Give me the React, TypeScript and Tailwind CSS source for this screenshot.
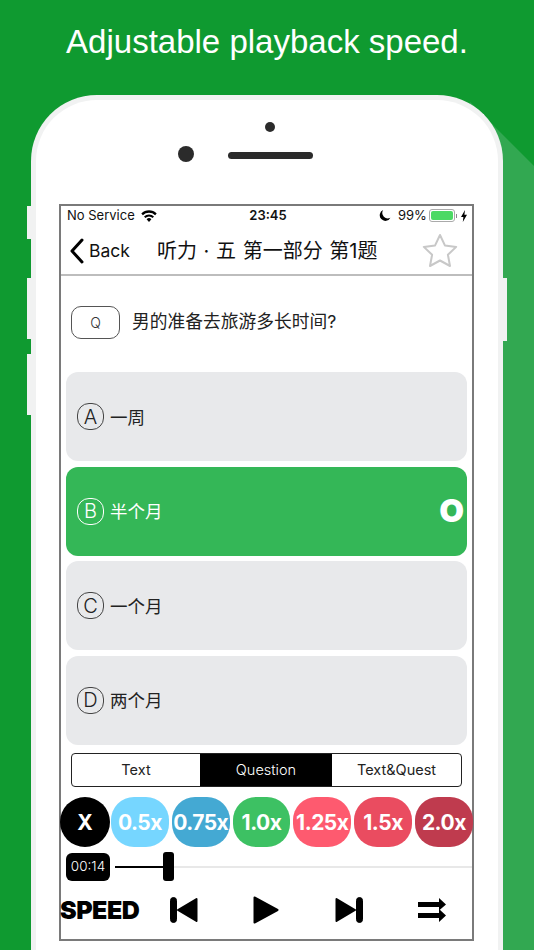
const font = "font-['Inter','Noto_Sans_CJK_SC',sans-serif]";

const options = [
  { letter: 'A', label: '一周' },
  { letter: 'B', label: '半个月', correct: true },
  { letter: 'C', label: '一个月' },
  { letter: 'D', label: '两个月' },
];

const speeds = [
  { label: '0.5x', color: 'bg-[#76d6ff]' },
  { label: '0.75x', color: 'bg-[#44a9d3]' },
  { label: '1.0x', color: 'bg-[#3dc163]' },
  { label: '1.25x', color: 'bg-[#fe5a6f]' },
  { label: '1.5x', color: 'bg-[#ea4c60]' },
  { label: '2.0x', color: 'bg-[#bf3b4e]' },
];

function StatusBar() {
  return (
    <div className="flex h-[21px] items-center whitespace-nowrap pb-[2px] pl-[6px] text-[13px] leading-none text-[#111]">
      <span className="w-[68px]">No Service</span>
      <svg viewBox="0 0 16 12" className="ml-[6px] h-[12px] w-[16px] shrink-0" fill="#000">
        <path d="M8 12 5.6 9.3a3.4 3.4 0 0 1 4.8 0Z" />
        <path d="M4.4 8.1 3 6.5a7 7 0 0 1 10 0l-1.4 1.6a5 5 0 0 0-7.2 0Z" />
        <path d="M1.9 5.3.3 3.5a11 11 0 0 1 15.4 0l-1.6 1.8a8.8 8.8 0 0 0-12.2 0Z" />
      </svg>
      <span className="ml-[92px] w-[38px] text-center font-semibold">23:45</span>
      <svg viewBox="0 0 12 12" className="ml-[92px] h-[13px] w-[12px] shrink-0" fill="#000">
        <path d="M4.2.6a5.6 5.6 0 1 0 7.2 7.6A5.4 5.4 0 0 1 4.2.6Z" />
      </svg>
      <span className="ml-[7px] w-[27px]">99%</span>
      <div className="ml-[4px] flex h-[13px] w-[26px] shrink-0 items-center rounded-[3px] border border-[#aaa] p-px">
        <div className="h-full w-full rounded-[2px] bg-[#4cd964]" />
      </div>
      <div className="ml-px h-[4px] w-px shrink-0 bg-[#888]" />
      <svg viewBox="0 0 6 12" className="ml-[4px] h-[12px] w-[6px] shrink-0" fill="#000">
        <path d="M4 0 0 7h2.4L1.8 12 6 4.8H3.4Z" />
      </svg>
    </div>
  );
}

function NavBar() {
  return (
    <div className="flex h-[49px] items-center border-b-2 border-[#bdbdbd] pl-[9px]">
      <svg viewBox="0 0 14 26" className="h-[26px] w-[14px] shrink-0" fill="none" stroke="#000" strokeWidth="3" strokeLinecap="round" strokeLinejoin="round">
        <path d="M12 2 2 13l10 11" />
      </svg>
      <span className="ml-[5px] w-[40px] text-[17.5px] leading-none text-[#111]">Back</span>
      <span className="ml-[28px] w-[220px] text-[20px] leading-none whitespace-nowrap text-[#111] [word-spacing:1px]">听力 · 五 第一部分 第1题</span>
      <svg viewBox="0 0 36 34" className="-mt-[2px] ml-[45px] h-[34px] w-[36px] shrink-0" fill="#fff" stroke="#c8c8c8" strokeWidth="2" strokeLinejoin="round">
        <path d="m18 2 4.9 10.4 11.3 1.5-8.3 7.9 2.1 11.2L18 27.5 8 33l2.1-11.2-8.3-7.9 11.3-1.5Z" />
      </svg>
    </div>
  );
}

function Question() {
  return (
    <div className="flex h-[96px] items-start pl-[10px] pt-[30px]">
      <div className="flex h-[33px] w-[49px] items-center justify-center rounded-[10px] border border-[#555] text-[14px] font-light text-[#333]">Q</div>
      <span className="ml-[12px] mt-[5px] text-[17.75px] leading-[22px] text-[#222]">男的准备去旅游多长时间?</span>
    </div>
  );
}

function Option({ letter, label, correct }: { letter: string; label: string; correct?: boolean }) {
  return (
    <div className={`relative flex h-[89px] items-center rounded-[12px] pl-[11px] ${correct ? 'bg-[#34b757] text-white' : 'bg-[#e8e9eb] text-[#222]'}`}>
      <div className={`flex h-[27px] w-[27px] items-center justify-center rounded-[12px] border text-[20px] font-light ${correct ? 'border-white' : 'border-[#444]'}`}>{letter}</div>
      <span className="ml-[6px] mt-[2px] text-[17.5px] leading-none">{label}</span>
      {correct && <span className="absolute right-[3px] top-[27px] text-[32px] leading-[34px] font-black text-white">O</span>}
    </div>
  );
}

function Segments() {
  return (
    <div className="mx-[10px] mt-[8.5px] flex h-[34px] overflow-hidden rounded-[4px] border-[1.5px] border-[#222] text-[14.5px] text-[#222]">
      <div className="flex w-[128px] items-center justify-center">Text</div>
      <div className="flex w-[132px] items-center justify-center bg-black font-light text-white">Question</div>
      <div className="flex flex-1 items-center justify-center">Text&amp;Quest</div>
    </div>
  );
}

function SpeedRow() {
  return (
    <div className="-mx-px mt-[10px] flex h-[50px] items-stretch gap-[3px]">
      <div className="mr-[-2px] flex w-[50px] items-center justify-center rounded-full bg-black pt-[2px] text-[21px] font-bold text-white">X</div>
      {speeds.map((s) => (
        <div key={s.label} className={`flex w-[57.8px] items-center justify-center rounded-[23px] pt-[2px] text-[21px] font-bold tracking-[-0.5px] text-white ${s.color}`}>
          {s.label}
        </div>
      ))}
    </div>
  );
}

function Progress() {
  return (
    <div className="mt-[5px] flex h-[29px] items-center pl-[5px]">
      <div className="flex h-[28px] w-[44px] items-center justify-center rounded-[6px] bg-black text-[13.5px] font-light text-white">00:14</div>
      <div className="ml-[5px] h-[2px] w-[48px] bg-black" />
      <div className="h-[29px] w-[11px] rounded-[3px] bg-black" />
      <div className="h-[2px] flex-1 bg-[#e8e8e8]" />
    </div>
  );
}

function Controls() {
  return (
    <div className="mt-[15px] flex items-center">
      <span className="-ml-[1px] w-[110px] text-[25px] leading-[28px] font-black tracking-[-0.5px] text-black">SPEED</span>
      <svg viewBox="0 0 28 26" className="h-[26px] w-[28px]" fill="#000" stroke="#000" strokeLinejoin="round">
        <rect x="0.5" y="0.5" width="6" height="25" rx="3" />
        <path d="M26.5 2 8 13l18.5 11Z" strokeWidth="2" />
      </svg>
      <svg viewBox="0 0 26 28" className="ml-[55px] h-[28px] w-[26px]" fill="#000" stroke="#000" strokeLinejoin="round">
        <path d="M1.5 1.5 24.5 14 1.5 26.5Z" strokeWidth="2" />
      </svg>
      <svg viewBox="0 0 28 26" className="ml-[56px] h-[26px] w-[28px]" fill="#000" stroke="#000" strokeLinejoin="round">
        <rect x="21.5" y="0.5" width="6" height="25" rx="3" />
        <path d="M1.5 2 20 13 1.5 24Z" strokeWidth="2" />
      </svg>
      <svg viewBox="0 0 28 24" className="ml-[55px] h-[24px] w-[28px]" fill="#000">
        <path d="M0 4h21V0l7 6.5-7 6V9H0Z" />
        <path d="M0 15h21v-4l7 6.5-7 6.5v-4H0Z" />
      </svg>
    </div>
  );
}

export default function App() {
  return (
    <div className={`relative h-[950px] w-[534px] overflow-hidden bg-[#0f9a30] ${font}`}>
      {/* long shadow behind the phone */}
      <div className="absolute left-[470px] top-[102px] h-[848px] w-[64px] bg-[#32a851] [clip-path:polygon(0_0,64px_64px,64px_100%,0_100%)]" />

      <h1 className="relative flex h-[95px] items-center justify-center pb-[12px] font-['Liberation_Sans',sans-serif] text-[33px] font-normal text-white">
        Adjustable playback speed.
      </h1>

      <div className="relative ml-[31px] h-[855px] w-[472px]">
        {/* side buttons */}
        <div className="absolute -left-[4px] top-[111px] h-[33px] w-[4px] bg-[#f1f2f2]" />
        <div className="absolute -left-[4px] top-[183px] h-[61px] w-[4px] bg-[#f1f2f2]" />
        <div className="absolute -left-[4px] top-[259px] h-[61px] w-[4px] bg-[#f1f2f2]" />
        <div className="absolute -right-[4px] top-[183px] h-[63px] w-[4px] bg-[#f1f2f2]" />

        <div className="h-full rounded-t-[66px] border-[5px] border-b-0 border-[#f1f2f2] bg-white pl-[23px] pt-[104px]">
          {/* sensor dot, camera and speaker */}
          <div className="absolute left-[234px] top-[27px] h-[10px] w-[10px] rounded-full bg-[#2b2b2b]" />
          <div className="absolute left-[147px] top-[51px] h-[16px] w-[16px] rounded-full bg-[#2b2b2b]" />
          <div className="absolute left-[197px] top-[57px] h-[7px] w-[85px] rounded-full bg-[#2b2b2b]" />

          <div className="h-[737px] w-[415px] border-2 border-[#7a7a7a] bg-white">
            <StatusBar />
            <NavBar />
            <Question />
            <div className="mx-[5px] flex flex-col gap-[5.5px]">
              {options.map((o) => (
                <Option key={o.letter} {...o} />
              ))}
            </div>
            <Segments />
            <SpeedRow />
            <Progress />
            <Controls />
          </div>
        </div>
      </div>
    </div>
  );
}
